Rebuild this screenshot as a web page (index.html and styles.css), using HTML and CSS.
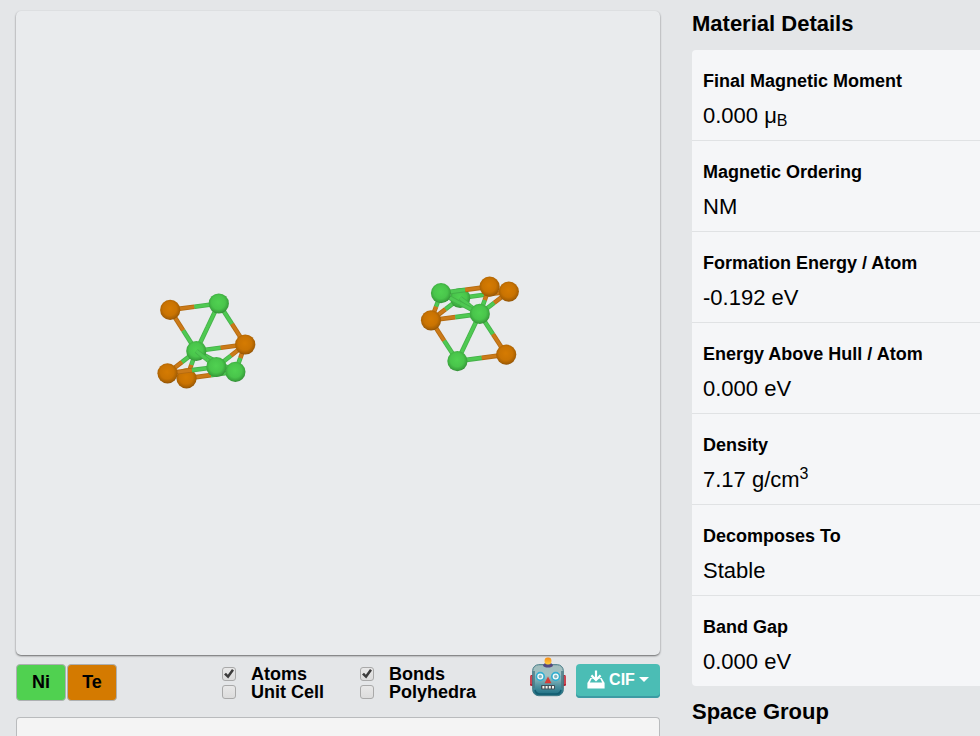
FILE: index.html
```html
<!DOCTYPE html>
<html lang="en">
<head>
    <meta charset="UTF-8">
    <meta name="viewport" content="width=device-width, initial-scale=1.0">
    <title>Material Details</title>
    <link rel="stylesheet" href="styles.css">
</head>

<body>
<div class="page">
    <main class="structure">
        <div class="viewer">
            <svg id="crystal" viewBox="16 11 644 644" role="img" aria-label="Crystal structure">
                <defs>
                    <radialGradient id="fillNi" cx="0.48" cy="0.44" r="0.56">
                        <stop offset="0" stop-color="#50d151"/>
                        <stop offset="0.6" stop-color="#49c54b"/>
                        <stop offset="0.88" stop-color="#3aa43d"/>
                        <stop offset="1" stop-color="#348a37"/>
                    </radialGradient>
                    <radialGradient id="fillTe" cx="0.48" cy="0.44" r="0.56">
                        <stop offset="0" stop-color="#d57b02"/>
                        <stop offset="0.6" stop-color="#c97302"/>
                        <stop offset="0.88" stop-color="#a86003"/>
                        <stop offset="1" stop-color="#8d5208"/>
                    </radialGradient>
                </defs>
            </svg>
        </div>

        <div class="controls">
            <div class="legend">
                <button type="button" class="element ni">Ni</button>
                <button type="button" class="element te">Te</button>
            </div>

            <div class="toggles">
                <label><input type="checkbox" checked>Atoms</label>
                <label><input type="checkbox" checked>Bonds</label>
                <label><input type="checkbox">Unit Cell</label>
                <label><input type="checkbox">Polyhedra</label>
            </div>

            <div class="actions">
                <button type="button" class="robot" aria-label="Robot">
                    <svg viewBox="0 0 36 40" width="36" height="40">
                        <defs>
                            <linearGradient id="head" x1="0" y1="0" x2="0" y2="1">
                                <stop offset="0" stop-color="#a3bdbc"/>
                                <stop offset="0.35" stop-color="#a0c3c5"/>
                                <stop offset="0.7" stop-color="#4b919f"/>
                                <stop offset="1" stop-color="#176b80"/>
                            </linearGradient>
                            <linearGradient id="bulb" x1="0" y1="0" x2="0" y2="1">
                                <stop offset="0" stop-color="#f58a16"/>
                                <stop offset="1" stop-color="#ffd23c"/>
                            </linearGradient>
                        </defs>
                        <rect x="0" y="18" width="5" height="11" rx="1.5" fill="#b62334"/>
                        <rect x="31" y="18" width="5" height="11" rx="1.5" fill="#b62334"/>
                        <path d="M1 19v8M35 19v8" stroke="#e06a70"/>
                        <rect x="2.7" y="7.7" width="30.6" height="31" rx="6" fill="url(#head)" stroke="#3f7884" stroke-width="1"/>
                        <path d="M4 14v17M32 14v17" stroke="#4c7984" stroke-width="1.5"/>
                        <path d="M5 33q1 4 5 4h16q4 0 5-4" fill="none" stroke="#135c70" stroke-width="1.5"/>
                        <path d="M13 8.5q1-3 5-3t5 3q-1 2-5 2t-5-2z" fill="#554a80"/>
                        <rect x="14.6" y="0.5" width="6.8" height="7" rx="3" fill="url(#bulb)"/>
                        <circle cx="10.3" cy="19.5" r="3.9" fill="#f2fcfc" stroke="#32aed0" stroke-width="1.7"/>
                        <circle cx="25.7" cy="19.5" r="3.9" fill="#f2fcfc" stroke="#32aed0" stroke-width="1.7"/>
                        <circle cx="10.3" cy="19.5" r="1.7" fill="#86b4bd"/>
                        <circle cx="25.7" cy="19.5" r="1.7" fill="#86b4bd"/>
                        <path d="M18 19.6l3.5 6.6h-7z" fill="#d63c36"/>
                        <rect x="11" y="28" width="14" height="4.4" rx="1" fill="#425058"/>
                        <path d="M12.4 30.2h12" stroke="#f4f5ee" stroke-width="2.6" stroke-dasharray="2 1.2"/>
                    </svg>
                </button>
                <button type="button" class="download">
                    <svg viewBox="0 0 18 19" width="18" height="19" aria-hidden="true">
                        <path d="M3.4 8h11.2l3 5v5.5H0.4V13z" fill="#fff"/>
                        <path d="M2.8 12.4l2-4h8.4l2 4z" fill="#4bbdb5"/>
                        <path d="M9 0.5v9M4.4 5.4L9 10l4.6-4.6" fill="none" stroke="#fff" stroke-width="2.2"/>
                    </svg>
                    CIF
                    <span class="caret"></span>
                </button>
            </div>
        </div>

        <div class="panel"></div>
    </main>

    <aside class="details">
        <h2>Material Details</h2>
        <dl class="card">
            <div class="row">
                <dt>Final Magnetic Moment</dt>
                <dd>0.000 μ<sub>B</sub></dd>
            </div>
            <div class="row">
                <dt>Magnetic Ordering</dt>
                <dd>NM</dd>
            </div>
            <div class="row">
                <dt>Formation Energy / Atom</dt>
                <dd>-0.192 eV</dd>
            </div>
            <div class="row">
                <dt>Energy Above Hull / Atom</dt>
                <dd>0.000 eV</dd>
            </div>
            <div class="row">
                <dt>Density</dt>
                <dd>7.17 g/cm<sup>3</sup></dd>
            </div>
            <div class="row">
                <dt>Decomposes To</dt>
                <dd>Stable</dd>
            </div>
            <div class="row">
                <dt>Band Gap</dt>
                <dd>0.000 eV</dd>
            </div>
        </dl>
        <h2>Space Group</h2>
    </aside>
</div>

<script src="script.js"></script>
</body>
</html>
```
FILE: styles.css
```css
* {
    box-sizing: border-box;
}

body {
    margin: 0;
    background-color: #e4e6e8;
    color: #000;
    font-family: "Liberation Sans", Arial, sans-serif;
    font-size: 18px;
    height: 100vh;
    overflow: hidden;
}

button {
    font-family: inherit;
    font-weight: bold;
    cursor: pointer;
}

.page {
    display: grid;
    grid-template-columns: minmax(0, 161fr) minmax(0, 72fr);
    gap: 32px;
    padding: 11px 0 0 16px;
    height: 100%;
}

/* Structure viewer */
.structure {
    display: flex;
    flex-direction: column;
}

.viewer {
    aspect-ratio: 1;
    flex-shrink: 0;
    background-color: #e9ebed;
    border-radius: 5px;
    box-shadow: 0 1px 2px rgba(0, 0, 0, 0.55);
}

.viewer svg {
    display: block;
    width: 100%;
}

.controls {
    display: flex;
    align-items: flex-start;
    padding: 9px 0 16px;
}

.legend {
    display: flex;
    gap: 1px;
}

.element {
    width: 50px;
    height: 37px;
    padding: 0;
    border: 1px solid #adb0b2;
    border-radius: 4px;
    font-size: 18px;
}

.ni {
    background-color: #50d150;
}

.te {
    background-color: #d47a00;
}

.toggles {
    display: grid;
    grid-template-columns: 138px auto;
    margin-left: 105px;
    padding-top: 1px;
}

.toggles label {
    display: flex;
    align-items: center;
    gap: 15px;
    font-weight: bold;
    line-height: 18px;
}

.toggles input {
    appearance: none;
    display: grid;
    place-items: center;
    width: 14px;
    height: 14px;
    margin: 0;
    border: 1px solid #a9a9a9;
    border-radius: 3px;
    background: linear-gradient(#e8e8e8, #dcdcdc);
}

.toggles input:checked::before {
    content: "";
    width: 10px;
    height: 10px;
    background-color: #3c3c3c;
    clip-path: polygon(0 55%, 20% 38%, 38% 58%, 80% 0, 100% 14%, 42% 96%);
}

.actions {
    display: flex;
    gap: 10px;
    margin-left: auto;
}

.robot {
    height: 33px;
    padding: 0;
    border: 0;
    background: none;
    display: flex;
    align-items: flex-end;
}

.robot svg {
    flex-shrink: 0;
}

.download {
    display: flex;
    align-items: center;
    justify-content: center;
    gap: 4px;
    width: 84px;
    height: 34px;
    padding: 0 0 3px;
    border: 0;
    border-radius: 4px;
    background-color: #4bbdb5;
    box-shadow: inset 0 -2px 0 #3c9ba3;
    color: #fff;
    font-size: 16px;
}

.caret {
    border: 5px solid transparent;
    border-top-color: #fff;
    border-bottom: 0;
}

.panel {
    flex: 1;
    border: 1px solid #b9bbbd;
    border-bottom: 0;
    border-radius: 4px 4px 0 0;
    background-color: #f4f4f4;
}

/* Material details */
.details h2 {
    margin: 0 0 13px;
    font-size: 22px;
    line-height: 26px;
}

.card {
    margin: 0 0 13px;
    background-color: #f5f6f8;
    border-radius: 4px 0 0 4px;
}

.row {
    padding: 18px 11px 8px;
}

.row + .row {
    border-top: 1px solid #e0e2e4;
}

.row dt {
    margin-bottom: 6px;
    font-weight: bold;
    line-height: 26px;
}

.row dd {
    margin: 0;
    font-size: 22px;
    line-height: 32px;
}

sub,
sup {
    font-size: 16px;
    line-height: 0;
}

sub {
    vertical-align: -3px;
}
```
FILE: script.js
```js
// Projected atom positions, then what to draw from back to front:
// one name is an atom, two names are a bond
const clusters = [
    {
        atoms: {
            te1: [170.2, 309.9], ni1: [218.8, 303.5], te2: [245.2, 344.5], ni2: [196.3, 351],
            te3: [167.5, 373.3], te4: [186.5, 378.4], ni3: [216.4, 367], ni4: [235.4, 371.8]
        },
        order: ['ni1 ni2', 'te2 ni4', 'te4 ni2', 'te4 ni4', 'ni2 ni4', 'ni4', 'te4', 'te1 ni1', 'te1 ni2',
            'ni1 te2', 'ni2 te2', 'te2 ni3', 'ni2 te3', 'te2', 'te1', 'ni1', 'ni2', 'ni2 ni3',
            'te3 ni3', 'te3', 'ni3']
    },
    {
        atoms: {
            ni1: [441, 293.1], ni2: [460.2, 298], te1: [489.6, 286.6], te2: [508.8, 291.6],
            te3: [431, 320.3], ni3: [479.8, 313.9], ni4: [457.4, 361.1], te4: [506.2, 354.6]
        },
        order: ['ni2 te2', 'te3 ni2', 'ni2', 'ni2 ni3', 'ni3 te2', 'te2', 'ni1 te3', 'te3 ni3', 'te3 ni4',
            'ni1 te1', 'ni1 ni3', 'te1 ni3', 'ni4 ni3', 'ni3 te4', 'ni4 te4', 'te3', 'ni4', 'te4',
            'ni1', 'te1', 'ni3']
    }
];

const bondColors = {
    ni: ['#44b048', '#4fc952'],
    te: ['#b3690f', '#cb7a18']
};

const crystal = document.getElementById('crystal');

function addShape(tag, attributes) {
    const shape = document.createElementNS('http://www.w3.org/2000/svg', tag);
    for (const key in attributes) {
        shape.setAttribute(key, attributes[key]);
    }
    crystal.appendChild(shape);
}

// Each half of a bond takes the colour of the atom at its end
function drawHalfBond(from, to, element) {
    const line = { x1: from[0], y1: from[1], x2: (from[0] + to[0]) / 2, y2: (from[1] + to[1]) / 2 };
    addShape('line', { ...line, stroke: bondColors[element][0], 'stroke-width': 4.6 });
    addShape('line', { ...line, stroke: bondColors[element][1], 'stroke-width': 3 });
}

clusters.forEach(({ atoms, order }) => {
    order.forEach(item => {
        const [a, b] = item.split(' ');
        if (b) {
            drawHalfBond(atoms[a], atoms[b], a.slice(0, 2));
            drawHalfBond(atoms[b], atoms[a], b.slice(0, 2));
        } else {
            const fill = a.startsWith('ni') ? 'url(#fillNi)' : 'url(#fillTe)';
            addShape('circle', { cx: atoms[a][0], cy: atoms[a][1], r: 10.1, fill: fill });
        }
    });
});
```
